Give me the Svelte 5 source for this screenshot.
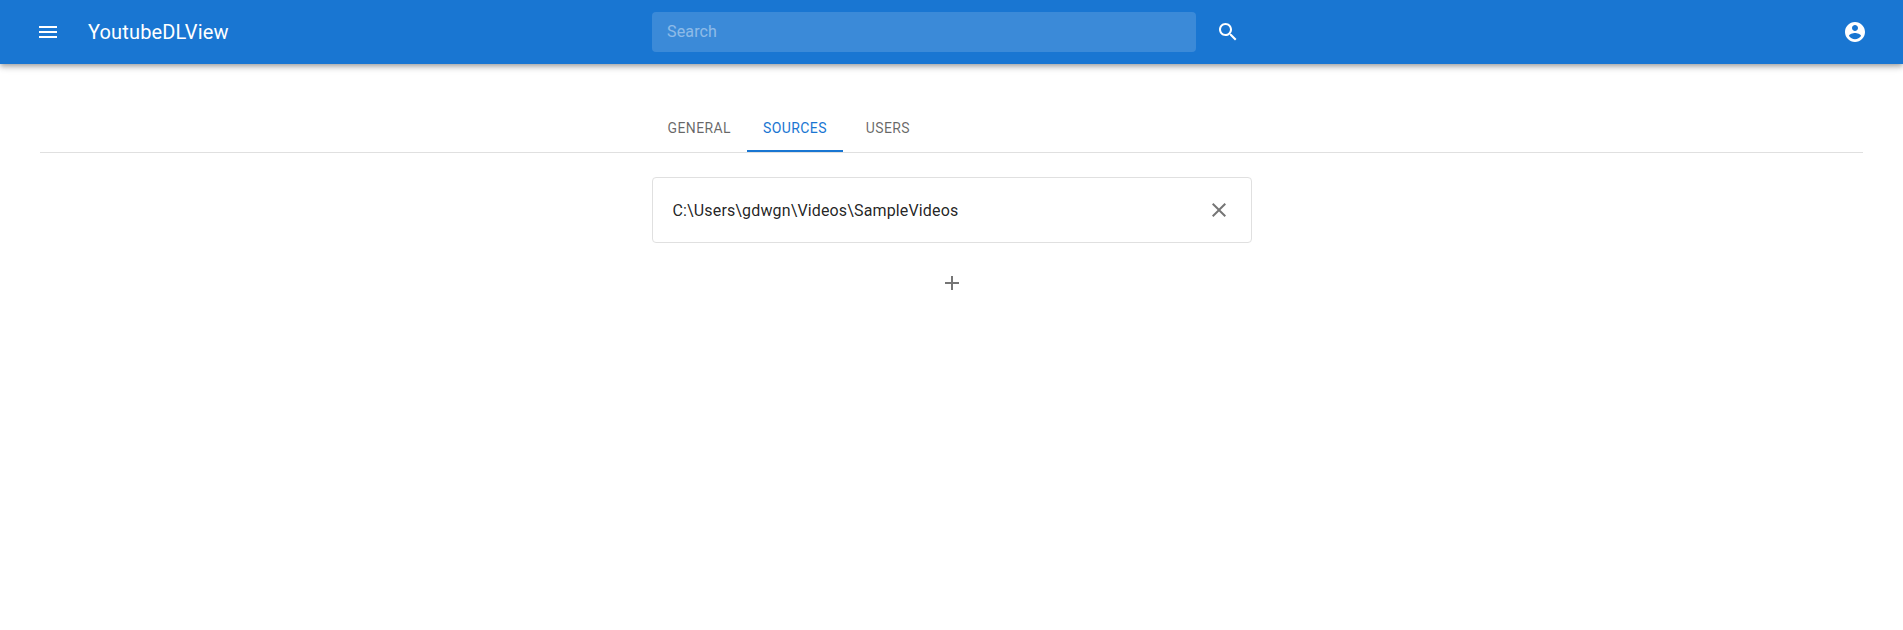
<script>
  const tabs = ['General', 'Sources', 'Users'];
  let active = $state('Sources');
  let sources = $state(['C:\\Users\\gdwgn\\Videos\\SampleVideos']);
  let query = $state('');
  const icons = {
    menu: 'M3 18h18v-2H3v2zm0-5h18v-2H3v2zm0-7v2h18V6H3z',
    search: 'M15.5 14h-.79l-.28-.27C15.41 12.59 16 11.11 16 9.5 16 5.91 13.09 3 9.5 3S3 5.91 3 9.5 5.91 16 9.5 16c1.61 0 3.09-.59 4.23-1.57l.27.28v.79l5 4.99L20.49 19l-4.99-5zm-6 0C7.01 14 5 11.99 5 9.5S7.01 5 9.5 5 14 7.01 14 9.5 11.99 14 9.5 14z',
    account: 'M12 2C6.48 2 2 6.48 2 12s4.48 10 10 10 10-4.48 10-10S17.52 2 12 2zm0 3c1.66 0 3 1.34 3 3s-1.34 3-3 3-3-1.34-3-3 1.34-3 3-3zm0 14.2c-2.5 0-4.71-1.28-6-3.22.03-1.99 4-3.08 6-3.08 1.99 0 5.97 1.09 6 3.08-1.29 1.94-3.5 3.22-6 3.22z',
    close: 'M19 6.41L17.59 5 12 10.59 6.41 5 5 6.41 10.59 12 5 17.59 6.41 19 12 13.41 17.59 19 19 17.59 13.41 12z',
    add: 'M19 13h-6v6h-2v-6H5v-2h6V5h2v6h6v2z'
  };
</script>

{#snippet iconButton(name, label, onclick)}
  <button class="icon-button" aria-label={label} {onclick}>
    <svg viewBox="0 0 24 24"><path d={icons[name]} /></svg>
  </button>
{/snippet}

<header>
  <div class="side">
    {@render iconButton('menu', 'Menu')}
    <h1>YoutubeDLView</h1>
  </div>
  <div class="search">
    <input placeholder="Search" aria-label="Search" bind:value={query} />
    {@render iconButton('search', 'Submit search')}
  </div>
  <div class="side end">
    {@render iconButton('account', 'Account')}
  </div>
</header>

<main>
  <nav>
    <div class="tabs column">
      {#each tabs as tab}
        <button class="tab" class:selected={tab === active} onclick={() => (active = tab)}>{tab}</button>
      {/each}
    </div>
  </nav>
  <section class="column">
    {#each sources as source, i}
      <div class="card">
        <span>{source}</span>
        {@render iconButton('close', 'Remove', () => sources.splice(i, 1))}
      </div>
    {/each}
    <div class="add">{@render iconButton('add', 'Add source')}</div>
  </section>
</main>

<style>
  :global(body) {
    background: #fff;
    font-family: Roboto, sans-serif;
    color: rgba(0, 0, 0, 0.87);
  }
  * {
    box-sizing: border-box;
  }
  button,
  input {
    border: 0;
    margin: 0;
    font-family: inherit;
    background: none;
  }
  header {
    position: relative;
    display: flex;
    align-items: center;
    height: 64px;
    padding: 0 24px;
    color: #fff;
    background: #1976d2;
    box-shadow:
      0 2px 4px -1px rgba(0, 0, 0, 0.2),
      0 4px 5px 0 rgba(0, 0, 0, 0.14),
      0 1px 10px 0 rgba(0, 0, 0, 0.12);
  }
  .side {
    flex: 1;
    display: flex;
    align-items: center;
    gap: 16px;
  }
  .end {
    justify-content: flex-end;
  }
  h1 {
    margin: 0;
    font-size: 20px;
    font-weight: 400;
    line-height: 32px;
    letter-spacing: 0.0075em;
  }
  .search {
    display: flex;
    align-items: center;
    gap: 8px;
    width: 600px;
  }
  input {
    flex: 1;
    min-width: 0;
    height: 40px;
    padding: 0 15px 1px 15.5px;
    border-radius: 4px;
    outline: 0;
    font-size: 16px;
    letter-spacing: 0.00938em;
    color: #fff;
    background: rgba(255, 255, 255, 0.15);
  }
  input::placeholder {
    color: #fff;
    opacity: 0.42;
  }
  .icon-button {
    display: flex;
    flex: none;
    width: 48px;
    height: 48px;
    padding: 12px;
    color: inherit;
    cursor: pointer;
  }
  svg {
    width: 24px;
    height: 24px;
    fill: currentColor;
  }
  main {
    padding: 40px 40px 0;
  }
  nav {
    border-bottom: 1px solid #e0e0e0;
  }
  .column {
    width: 600px;
    margin: 0 auto;
  }
  .tabs {
    display: flex;
  }
  .tab {
    min-width: 90px;
    height: 48px;
    padding: 0 16px;
    border-top: 2px solid transparent;
    border-bottom: 2px solid transparent;
    font-size: 14px;
    font-weight: 400;
    letter-spacing: 0.02857em;
    text-transform: uppercase;
    color: rgba(0, 0, 0, 0.6);
    cursor: pointer;
  }
  .selected {
    color: #1976d2;
    border-bottom-color: #1976d2;
  }
  section {
    padding-top: 24px;
  }
  .card {
    display: flex;
    align-items: center;
    justify-content: space-between;
    height: 66px;
    padding: 0 8px 0 20px;
    border: 1px solid #e0e0e0;
    border-radius: 4px;
    font-size: 16px;
    line-height: 24px;
    letter-spacing: 0.00938em;
  }
  .card span {
    padding-top: 2px;
  }
  .card .icon-button,
  .add {
    color: rgba(0, 0, 0, 0.54);
  }
  .add {
    display: flex;
    justify-content: center;
    padding-top: 16px;
  }
</style>
